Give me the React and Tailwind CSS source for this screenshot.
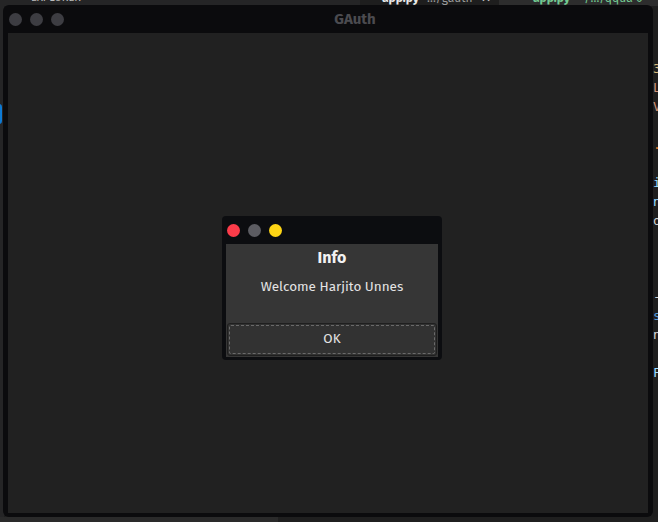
export default function App() {
  const codeLines = [
    { t: "3c", c: "text-[#d7ba7d]" },
    { t: "Lr", c: "text-[#ce9178]" },
    { t: "V", c: "text-[#ce9178]" },
    { t: " ", c: "" },
    { t: ".", c: "text-[#e07b2a]" },
    { t: " ", c: "" },
    { t: "ic", c: "text-[#9cdcfe]" },
    { t: "nt", c: "text-[#9cdcfe]" },
    { t: "ow", c: "text-[#d4d4d4]" },
    { t: " ", c: "" },
    { t: " ", c: "" },
    { t: " ", c: "" },
    { t: "-", c: "text-[#d4d4d4]" },
    { t: "s", c: "text-[#569cd6]" },
    { t: "n", c: "text-[#d4d4d4]" },
    { t: " ", c: "" },
    { t: "Fo", c: "text-[#9cdcfe]" },
  ];
  return (
    <div
      className="relative w-[658px] h-[522px] overflow-hidden bg-[#1e1e1e]"
      style={{ fontFamily: '"Fira Sans", "Noto Sans", "Open Sans", sans-serif' }}
    >
      {/* background editor: top bar */}
      <div className="absolute left-0 top-0 w-[658px] h-[6px] flex overflow-hidden text-[12px] leading-none">
        <div className="w-[360px] bg-[#252526] relative">
          <span className="absolute left-[31px] top-[-8px] text-[#bbbbbb] text-[11px]">EXPLORER</span>
        </div>
        <div className="w-[139px] bg-[#1e1e1e] relative">
          <span className="absolute left-[22px] top-[-8px] font-bold text-[#e8e8e8]">app.py</span>
          <span className="absolute left-[67px] top-[-8px] text-[#9a9a9a]">…/gauth</span>
          <span className="absolute left-[121px] top-[-8px] text-[#cccccc]">✕</span>
        </div>
        <div className="flex-1 bg-[#2d2d2d] relative">
          <span className="absolute left-[34px] top-[-8px] font-bold text-[#73c991]">app.py</span>
          <span className="absolute left-[80px] top-[-8px] text-[#73c991]">~/…/qqua 0</span>
        </div>
      </div>

      {/* left sidebar strip with blue dot */}
      <div className="absolute left-0 top-[6px] w-[4px] h-[516px] bg-[#252526]">
        <div className="absolute left-[-4px] top-[98px] w-[6px] h-[20px] rounded-full bg-[#0e7ad3]" />
      </div>

      {/* right code column */}
      <div
        className="absolute left-[653px] top-[59px] w-[20px] flex flex-col text-[13px] leading-[19px]"
        style={{ fontFamily: '"DejaVu Sans Mono", monospace' }}
      >
        {codeLines.map((l, i) => (
          <div key={i} className={`h-[19px] whitespace-pre ${l.c}`}>{l.t}</div>
        ))}
      </div>

      {/* bottom strip */}
      <div className="absolute left-0 top-[517px] w-[658px] h-[5px] flex">
        <div className="w-[278px] bg-[#2a2a2a]" />
        <div className="flex-1 bg-[#1f1f1f]" />
      </div>

      {/* main window */}
      <div className="absolute left-[3px] top-[5px] w-[650px] h-[512px] rounded-[6px] bg-[#0b0b0d] flex flex-col px-[5px] pb-[4px]">
        <div className="h-[28px] relative flex items-center gap-[8px] pl-[1px]">
          <div className="w-[13px] h-[13px] rounded-full bg-[#3d3d42]" />
          <div className="w-[13px] h-[13px] rounded-full bg-[#3d3d42]" />
          <div className="w-[13px] h-[13px] rounded-full bg-[#3d3d42]" />
          <div className="absolute left-0 right-0 top-0 h-[28px] flex items-center justify-center">
            <span className="text-[15px] font-bold text-[#4b4b50] ml-[54px]">GAuth</span>
          </div>
        </div>
        <div className="flex-1 bg-[#212121]" />
      </div>

      {/* dialog window */}
      <div className="absolute left-[222px] top-[216px] w-[220px] h-[144px] rounded-[4px] bg-[#0c0d10] flex flex-col px-[4px] pb-[3px]">
        <div className="h-[28px] flex items-center gap-[8px] pl-[1px]">
          <div className="w-[13px] h-[13px] rounded-full bg-[#fc3c4a]" />
          <div className="w-[13px] h-[13px] rounded-full bg-[#5c5c62]" />
          <div className="w-[13px] h-[13px] rounded-full bg-[#fed515]" />
        </div>
        <div className="flex-1 bg-[#363636] flex flex-col items-center">
          <div className="mt-[5px] text-[16px] font-bold text-[#f2f2f2] leading-[18px]">Info</div>
          <div className="mt-[12px] text-[13.5px] text-[#e4e4e4] leading-[16px]">Welcome Harjito Unnes</div>
          <div className="mt-auto w-full px-[1px] pb-[1px]">
            <div className="h-[33px] rounded-[3px] border border-[#1f1f1f] bg-[#323232] p-[1px]">
              <div className="h-full rounded-[2px] border border-dashed border-[#6a6a6a] flex items-center justify-center text-[13.5px] text-[#e4e4e4]">
                OK
              </div>
            </div>
          </div>
        </div>
      </div>
    </div>
  );
}
